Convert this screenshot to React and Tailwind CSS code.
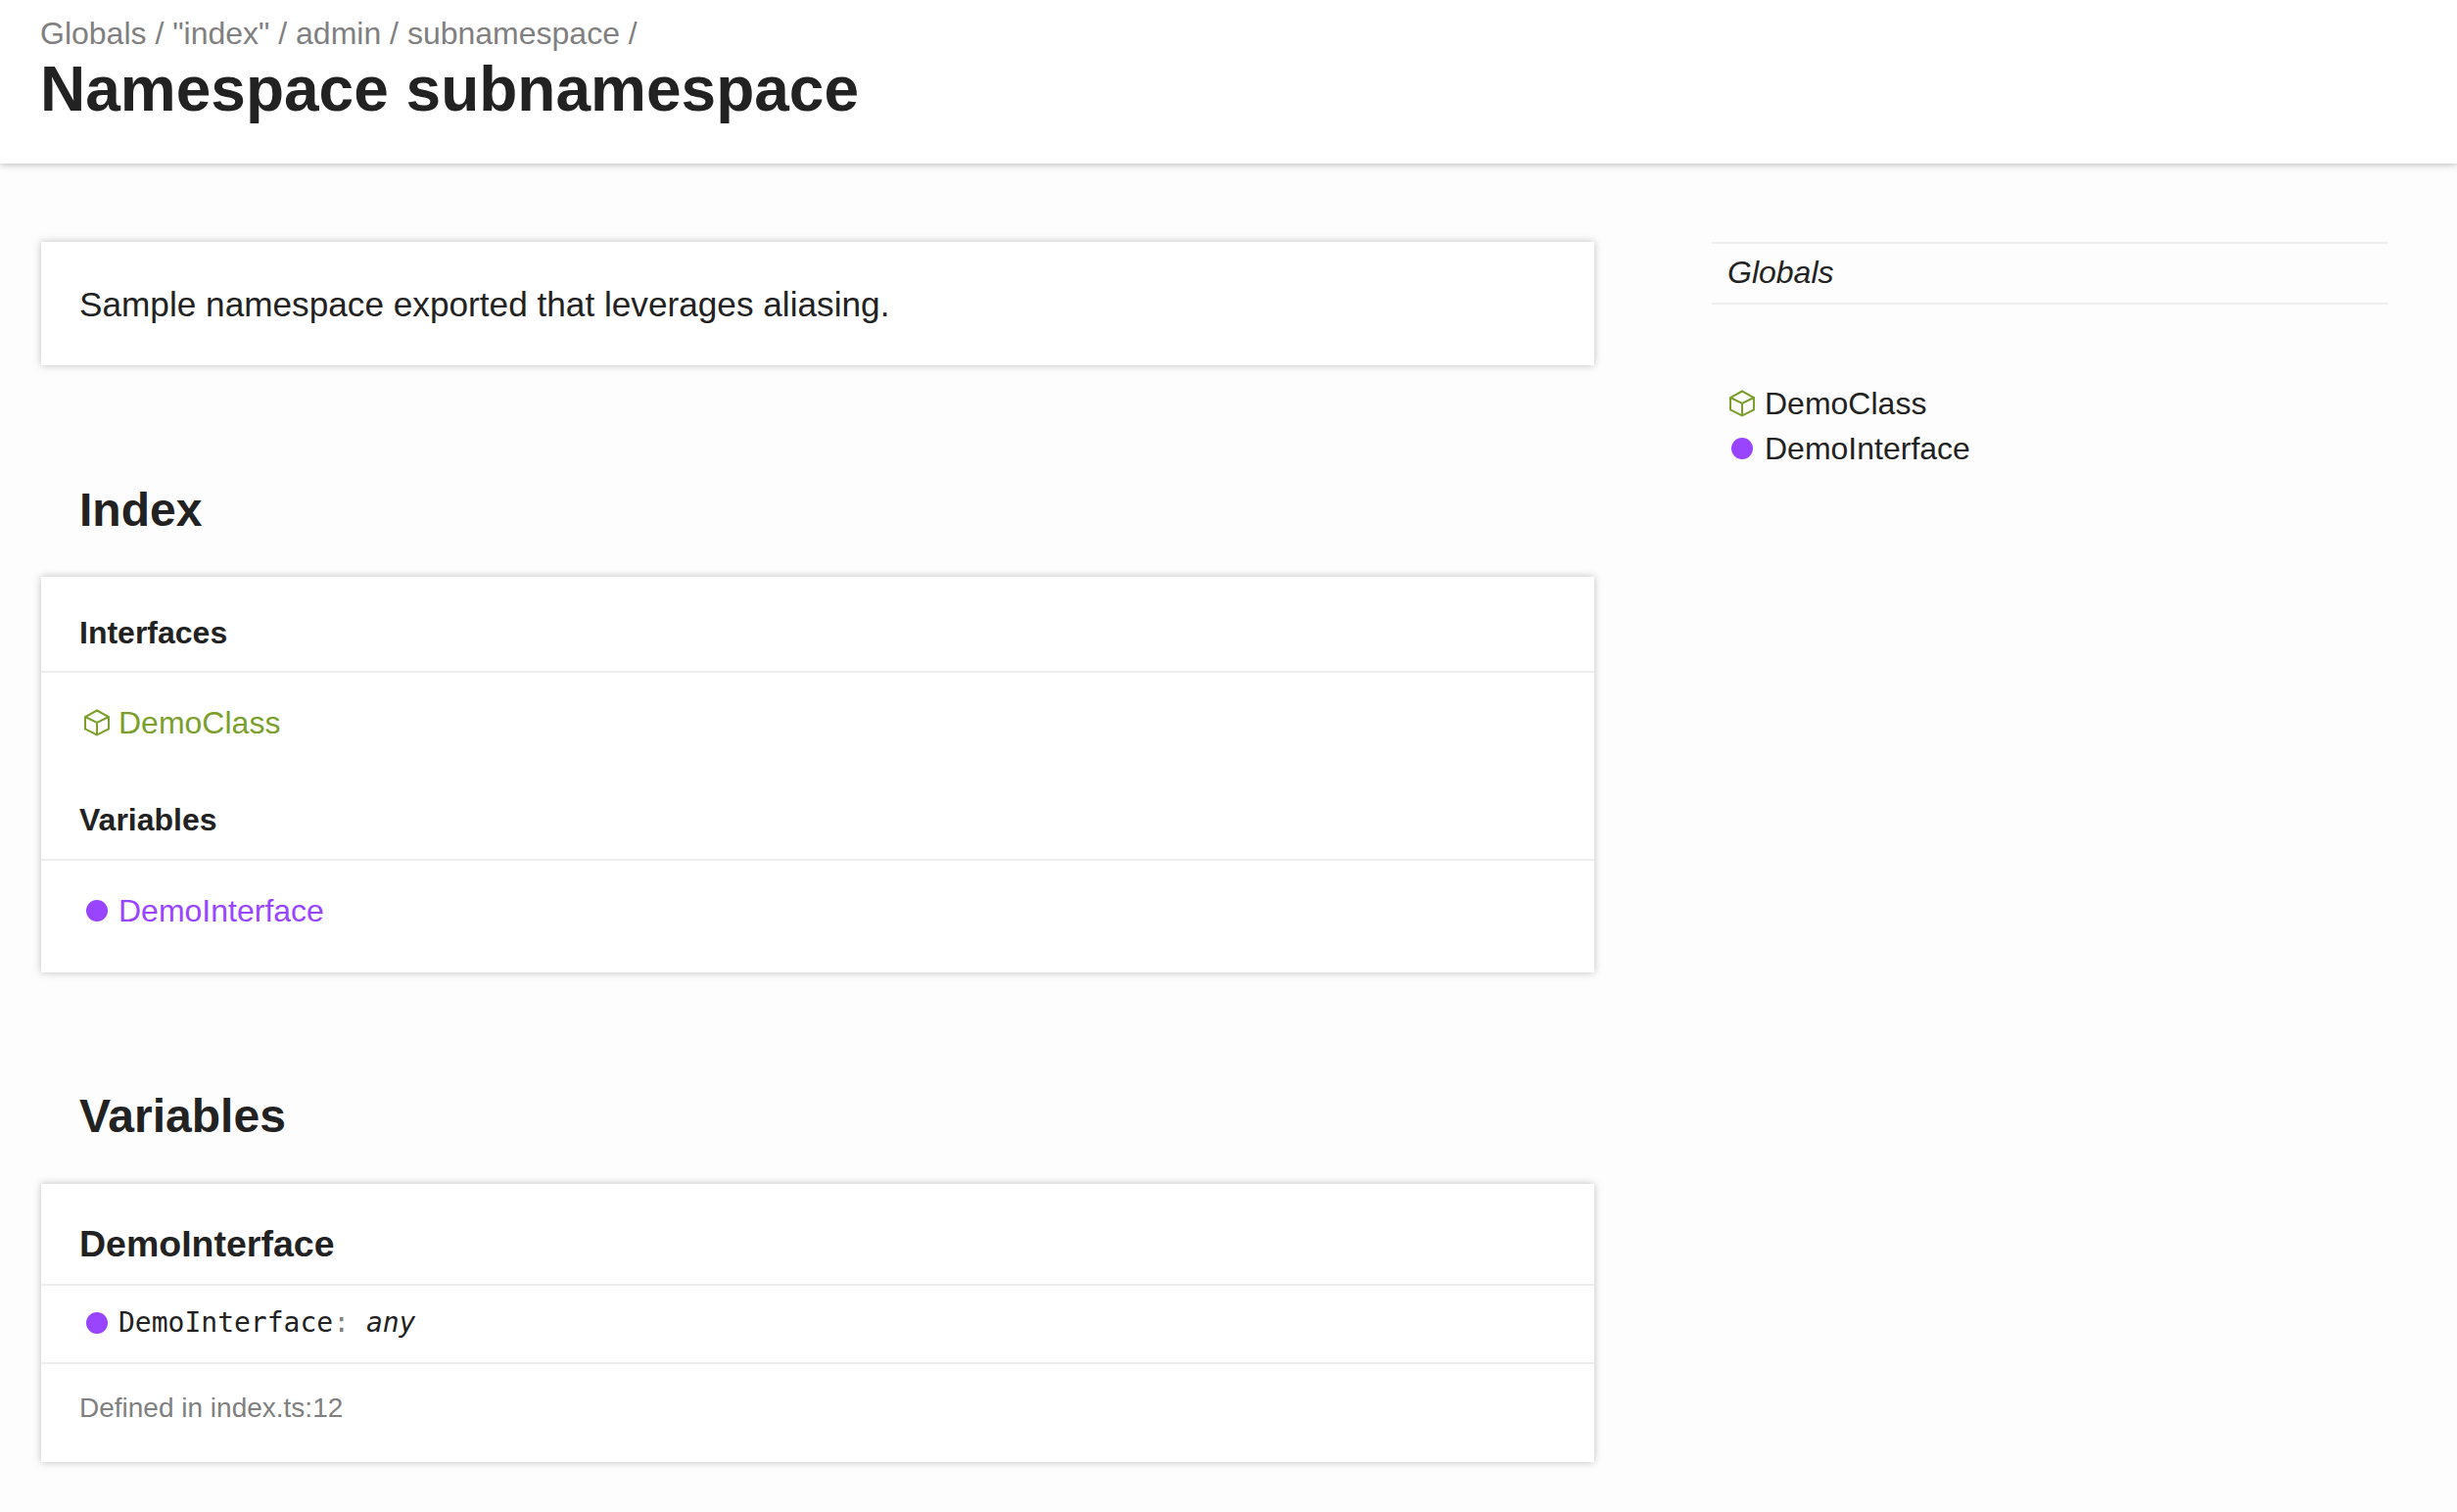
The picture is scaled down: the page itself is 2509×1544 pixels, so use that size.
import React from 'react';

const CubeIcon = () => (
  <svg className="w-[26px] h-[28px] shrink-0" viewBox="0 0 26 28" fill="none" stroke="#7b9f2c" strokeWidth="2" strokeLinejoin="miter">
    <path d="M13 1.5 L25 8 V20.5 L13 26.5 L1 20.5 V8 Z" />
    <path d="M1 8 L13 14 L25 8 M13 14 V26.5" />
  </svg>
);

const Dot = () => (
  <span className="w-[26px] h-[28px] shrink-0 flex items-center justify-center">
    <span className="block w-[22px] h-[22px] rounded-full bg-[#9944ff]"></span>
  </span>
);

const cardClass = 'bg-white shadow-[0_0_8px_rgba(0,0,0,0.25)]';

const App = () => {
  return (
    <div className="min-h-[1544px] bg-[#fdfdfd] text-[#222222] font-['Liberation_Sans',Arial,sans-serif]">
      {/* Header */}
      <header className="h-[167px] bg-white px-[41px] pt-[14px] shadow-[0_0_8px_rgba(0,0,0,0.35)]">
        <div className="text-[32px] leading-[40px] text-[#808080]">
          Globals / "index" / admin / subnamespace /
        </div>
        <h1 className="text-[64px] leading-[72px] font-bold pt-[1px]">Namespace subnamespace</h1>
      </header>

      <div className="flex gap-[120px] pl-[42px] pt-[80px]">
        {/* Main column */}
        <main className="w-[1586px] shrink-0">
          <section className={`${cardClass} h-[126px] px-[39px] pt-[3px] flex items-center text-[35.2px]`}>
            Sample namespace exported that leverages aliasing.
          </section>

          <h2 className="text-[48px] leading-[56px] font-bold pl-[39px] mt-[120px] mb-[40px]">Index</h2>
          <section className={`${cardClass} h-[404px]`}>
            <h3 className="h-[98px] pt-[37px] px-[39px] text-[32px] leading-[40px] font-bold border-b-2 border-[#eeeeee]">
              Interfaces
            </h3>
            <div className="h-[64px] mt-[19px] pl-[44px] flex items-center gap-[9px] text-[32px] text-[#7b9f2c]">
              <CubeIcon />
              <span>DemoClass</span>
            </div>
            <h3 className="h-[109px] pt-[47px] px-[39px] text-[32px] leading-[40px] font-bold border-b-2 border-[#eeeeee]">
              Variables
            </h3>
            <div className="h-[64px] mt-[19px] pl-[44px] flex items-center gap-[9px] text-[32px] text-[#9944ff]">
              <Dot />
              <span>DemoInterface</span>
            </div>
          </section>

          <h2 className="text-[48px] leading-[56px] font-bold pl-[39px] mt-[119px] mb-[41px]">Variables</h2>
          <section className={`${cardClass} h-[284px]`}>
            <h3 className="h-[104px] pt-[37px] px-[39px] text-[37.5px] leading-[48px] font-bold border-b-2 border-[#eeeeee]">
              DemoInterface
            </h3>
            <div className="h-[80px] pl-[44px] pb-[3px] flex items-center gap-[9px] border-b-2 border-[#eeeeee] font-['DejaVu_Sans_Mono',monospace] text-[28px]">
              <Dot />
              <span>
                DemoInterface<span className="text-[#808080]">: </span>
                <em className="italic">any</em>
              </span>
            </div>
            <div className="px-[39px] pt-[25px] text-[28px] leading-[40px] text-[#808080]">Defined in index.ts:12</div>
          </section>
        </main>

        {/* Sidebar */}
        <aside className="w-[691px] shrink-0">
          <div className="h-[64px] border-y-2 border-[#eeeeee] px-[16px] pb-[3px] flex items-center text-[32px] italic">
            Globals
          </div>
          <ul className="mt-[78px] text-[32px]">
            <li className="h-[46px] pl-[18px] flex items-center gap-[10px]">
              <CubeIcon />
              <span>DemoClass</span>
            </li>
            <li className="h-[46px] pl-[18px] flex items-center gap-[10px]">
              <Dot />
              <span>DemoInterface</span>
            </li>
          </ul>
        </aside>
      </div>
    </div>
  );
};

export default App;
